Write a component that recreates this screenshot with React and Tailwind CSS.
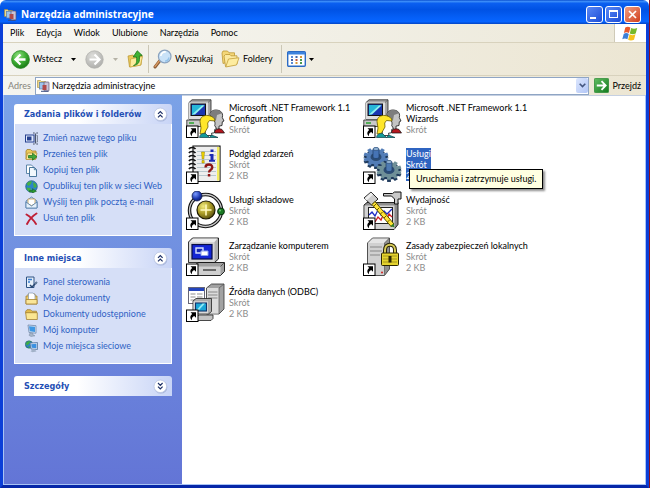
import React, { useState } from 'react';

/* ---------- small shared drawings ---------- */

const ToolsIcon = ({ size = 13 }) => (
  <svg width={size} height={size} viewBox="0 0 13 13" aria-hidden="true">
    <path d="M.5 1.500h3l1 1h4v6h-8z" fill="#ecd98a" stroke="#a58a3a" strokeWidth=".6" />
    <rect x="2.500" y="3.500" width="5" height="6.500" fill="#9cc4ee" stroke="#5b7fae" strokeWidth=".7" />
    <rect x="7" y="3" width="5" height="9" rx=".8" fill="#c9c4d8" stroke="#5d5674" strokeWidth=".7" />
    <rect x="5.500" y="6" width="4" height="5" fill="#b04a4a" />
    <path d="M4 12.300h7.500" stroke="#3a4d80" />
  </svg>
);

const Caret = ({ color = '#000' }) => (
  <svg width="5" height="3" viewBox="0 0 5 3" aria-hidden="true">
    <path d="M0 0h5L2.500 3z" fill={color} />
  </svg>
);

const Chevrons = ({ down }) => (
  <svg width="15" height="15" viewBox="0 0 15 15" aria-hidden="true">
    <circle cx="7.800" cy="8" r="6.600" fill="#8c9cc8" opacity=".6" />
    <circle cx="7.300" cy="7.300" r="6.300" fill="#fff" stroke="#b9c4e2" strokeWidth=".8" />
    <path
      d={down ? 'M5 4l2.300 2.300L9.600 4M5 7.700l2.300 2.300L9.600 7.700' : 'M5 6.800l2.300-2.300 2.300 2.300M5 10.400l2.300-2.300 2.300 2.300'}
      fill="none"
      stroke="#1c2f66"
      strokeWidth="1.200"
    />
  </svg>
);

/* ---------- toolbar icons ---------- */

const BackIcon = () => (
  <svg width="19" height="19" viewBox="0 0 19 19" aria-hidden="true">
    <defs>
      <radialGradient id="backFill" cx=".38" cy=".28" r=".8">
        <stop offset="0" stopColor="#8fe07f" />
        <stop offset=".5" stopColor="#3fae35" />
        <stop offset="1" stopColor="#12720f" />
      </radialGradient>
    </defs>
    <circle cx="9.500" cy="9.500" r="8.900" fill="url(#backFill)" stroke="#2b8a28" strokeWidth=".8" />
    <path d="M9.500 4.500l-5 5 5 5M5 9.500h9.500" fill="none" stroke="#fff" strokeWidth="2.300" />
  </svg>
);

const ForwardIcon = () => (
  <svg width="19" height="19" viewBox="0 0 19 19" aria-hidden="true">
    <defs>
      <radialGradient id="fwdFill" cx=".4" cy=".3" r=".8">
        <stop offset="0" stopColor="#dededb" />
        <stop offset="1" stopColor="#a9a9a6" />
      </radialGradient>
    </defs>
    <circle cx="9.500" cy="9.500" r="8.700" fill="url(#fwdFill)" stroke="#b2b2ae" strokeWidth=".8" />
    <path d="M9.500 4.500l5 5-5 5M14 9.500H4.500" fill="none" stroke="#fff" strokeWidth="2.200" />
  </svg>
);

const UpIcon = () => (
  <svg width="17" height="18" viewBox="0 0 17 18" aria-hidden="true">
    <path d="M1 6l5-1 1 1.500 8-1.500-1 10-11.500 2z" fill="#e9c95c" stroke="#b7922c" strokeWidth=".7" />
    <path d="M3.500 9l12-2.500-2 8.700L3 17z" fill="#fbeb9d" stroke="#c5a23a" strokeWidth=".7" />
    <path d="M6.500 15.500c3.200-1 3.500-4 3-8.500H6.200L10.300.8l4.900 4.700-2.900.6c.7 5-.3 8.900-5.800 9.400z" fill="#3fb234" stroke="#1b7419" strokeWidth=".8" />
  </svg>
);

const SearchIcon = () => (
  <svg width="19" height="20" viewBox="0 0 19 20" aria-hidden="true">
    <path d="M7 11.500L2 18" stroke="#8a5a34" strokeWidth="3" strokeLinecap="round" />
    <path d="M6.700 11.500L2 17.500" stroke="#d99b62" strokeWidth="1.300" strokeLinecap="round" />
    <circle cx="11.700" cy="7.500" r="6.300" fill="#c9e2f8" stroke="#8ba3bf" strokeWidth="1.200" />
    <path d="M7.800 7a4.200 4.200 0 0 1 5-4" fill="none" stroke="#fff" strokeWidth="1.600" />
    <path d="M16 8.500a4.400 4.400 0 0 1-4 3.600" fill="none" stroke="#94c3ea" strokeWidth="1.400" />
  </svg>
);

const FoldersIcon = () => (
  <svg width="19" height="18" viewBox="0 0 19 18" aria-hidden="true">
    <path d="M1 3l1-2h4.500L8 2.800h5.500V10L2 13.500z" fill="#f4d779" stroke="#bd9734" strokeWidth=".8" />
    <path d="M3 6l1.500-1.500H9l1 1.300h6V14L4.500 16.500z" fill="#fbe9a0" stroke="#bd9734" strokeWidth=".8" />
    <path d="M7.500 9L18 7.800 15.500 15 4.700 17z" fill="#fdec9f" stroke="#c39e3a" strokeWidth=".8" />
  </svg>
);

const ViewsIcon = () => (
  <svg width="19" height="16" viewBox="0 0 19 16" aria-hidden="true">
    <rect x=".7" y=".7" width="17.600" height="14.600" rx="1" fill="#fff" stroke="#2c6bc4" strokeWidth="1.400" />
    <rect x="1" y="1" width="17" height="2.500" fill="#3d83dd" />
    <path d="M4 5h2v2H4zM4 11h2v2H4z" fill="#5a8bd6" />
    <path d="M8.500 5h2v2h-2zM4 8h2v2H4z" fill="#3f64aa" />
    <path d="M13 5h2v2h-2zM8.500 11h2v2h-2z" fill="#d89a3a" />
    <path d="M8.500 8h2v2h-2z" fill="#c2523c" />
    <path d="M13 8h2v2h-2zM13 11h2v2h-2z" fill="#4a9a50" />
  </svg>
);

const GoIcon = () => (
  <svg width="15" height="15" viewBox="0 0 15 15" aria-hidden="true">
    <defs>
      <linearGradient id="goFill" x1="0" y1="0" x2="1" y2="1">
        <stop offset="0" stopColor="#62bd62" />
        <stop offset="1" stopColor="#127a1d" />
      </linearGradient>
    </defs>
    <rect x=".4" y=".4" width="14.200" height="14.200" rx="1" fill="url(#goFill)" stroke="#2a8a34" strokeWidth=".8" />
    <path d="M7.500 3.200l4.200 4.300-4.200 4.300M11 7.500H2.800" fill="none" stroke="#fff" strokeWidth="1.800" />
  </svg>
);

const WindowsFlag = () => (
  <svg width="17" height="15" viewBox="0 0 17 15" aria-hidden="true">
    <path d="M3.300 1.500C5 .4 6.700.4 8.400 1.500L7 7C5.400 6 3.600 6 1.900 7z" fill="#e8582c" />
    <path d="M9.200 1.900c1.800 1.100 3.800 1.100 6 0L13.700 7.400c-2 1.100-4.100 1.100-5.900 0z" fill="#76b82a" />
    <path d="M1.700 7.900c1.700-1.100 3.500-1 5.100 0l-1.400 5.300c-1.600-1-3.400-1-5.100 0z" fill="#3c7fd6" />
    <path d="M7.500 8.300c1.800 1.100 3.900 1.100 6 0L12 13.700c-2 1.100-4.200 1.100-5.900 0z" fill="#f6c21c" />
  </svg>
);

/* ---------- task pane icons ---------- */

const taskIcons = {
  rename: (
    <>
      <rect x=".5" y="3" width="8.500" height="7" fill="#dfe8fb" stroke="#26408f" />
      <rect x="2" y="4.500" width="4.500" height="4" fill="#26408f" />
      <path d="M8 1h1.700M11.300 1H13M10.500 1.500v10M8 12h1.700M11.300 12H13" stroke="#4b556c" strokeWidth="1.200" />
      <path d="M11.500 3.500h1v6.500h-1" fill="none" stroke="#6b7487" strokeWidth=".8" />
    </>
  ),
  move: (
    <>
      <path d="M1 3l1-1.500h3.500L7 3h4v8H1z" fill="#eac95c" stroke="#a6822a" strokeWidth=".8" />
      <path d="M2.500 5H12l-1.500 6.500H1z" fill="#fbea9a" stroke="#b8943a" strokeWidth=".8" />
      <path d="M3.500 7.500h4V5.200L12 8.800l-4.500 3.400V10h-4z" fill="#42a83b" stroke="#1d6a1b" strokeWidth=".7" />
    </>
  ),
  copy: (
    <>
      <path d="M1.500 1h5L8 2.500V9.500H1.500z" fill="#fff" stroke="#4f7aa0" strokeWidth=".9" />
      <path d="M4.500 3.500h5l2 2v7h-7z" fill="#f2f8fd" stroke="#386a92" strokeWidth=".9" />
      <path d="M9.300 3.700v2h2" fill="none" stroke="#386a92" strokeWidth=".8" />
    </>
  ),
  publish: (
    <>
      <circle cx="6.500" cy="6.500" r="5.800" fill="#2c84c8" stroke="#1b5385" strokeWidth=".7" />
      <path d="M1.500 4C3 1.500 5 1 7 1.200L6 4 3.500 6zM8 2l3 2 .8 3-3 1zM1.500 7.500l4 .5 1 4C4 12 2 10.500 1.500 7.500z" fill="#46b046" />
      <path d="M4.500 10.500h3V8.700l4 2.500-4 1.800v-1H4.500z" fill="#2e9a33" stroke="#125e16" strokeWidth=".5" />
    </>
  ),
  mail: (
    <>
      <path d="M1 5l5.500-4L12 5v7H1z" fill="#b9d3ee" stroke="#4c78a6" strokeWidth=".8" />
      <path d="M3 3h7v5L6.500 9.500 3 8z" fill="#fff" stroke="#c9a052" strokeWidth=".8" />
      <path d="M1 12V6l5.500 4L12 6v6z" fill="#e6f0fa" stroke="#4c78a6" strokeWidth=".8" />
    </>
  ),
  remove: <path d="M1.500 2.500c3.500 2 7 5.500 9.500 9.500M11.500 1.500C7.500 4 4 8 2 12" fill="none" stroke="#bf1f36" strokeWidth="1.900" strokeLinecap="round" />,
  panel: (
    <>
      <path d="M1.500 1h7.500v10.500H1.500z" fill="#e6effa" stroke="#2e5384" />
      <path d="M3 3.500h4M3 6h2" stroke="#3a7ed0" strokeWidth="1.300" />
      <path d="M5 9l2 2 5-5" fill="none" stroke="#27456f" strokeWidth="1.500" />
      <circle cx="11" cy="7" r="1.200" fill="#68809d" />
    </>
  ),
  documents: (
    <>
      <path d="M1 4h2V2h7v2h2v8H1z" fill="#efcd68" stroke="#a58232" strokeWidth=".8" />
      <path d="M3.500 1H8l2 2v6H3.500z" fill="#fff" stroke="#8195b2" strokeWidth=".7" />
      <path d="M1 7.500h11V12H1z" fill="#fae598" stroke="#a58232" strokeWidth=".8" />
    </>
  ),
  shared: (
    <>
      <path d="M.7 3.200L2 1.700h3.500L7 3.200h4.500v2H.7z" fill="#e3bb4c" stroke="#a58232" strokeWidth=".8" />
      <path d="M.7 4.700h11.600v6.800H1.500z" fill="#fbe692" stroke="#a58232" strokeWidth=".8" />
    </>
  ),
  computer: (
    <>
      <path d="M3 1l8 .7v7.500L4 8.500z" fill="#dbe4f0" stroke="#7089ad" strokeWidth=".8" />
      <path d="M4 2.200l6 .5v5.200l-5.200-.6z" fill="#3e97e4" />
      <path d="M5 9l3 .5v1.500l2 .8-4 .7-2-1.200z" fill="#a8b6c9" stroke="#7788a1" strokeWidth=".5" />
    </>
  ),
  network: (
    <>
      <circle cx="4" cy="4.500" r="3.700" fill="#2b82c6" stroke="#1b5a2d" strokeWidth=".5" />
      <path d="M.8 3.500C2 1.200 4 1 5.500 1.300L4 4 2 5.500zM3 6.200l2.500.3-.5 1.700z" fill="#3ead42" />
      <path d="M5 3l7.500-.5v7L6 9z" fill="#d4e0ef" stroke="#57749c" strokeWidth=".8" />
      <path d="M6.200 4.200l5.200-.4v4.500l-4.600-.5z" fill="#3b8fe0" />
      <path d="M7.500 9.500h2.500l1.500 2-4 .8-2-1z" fill="#a2b2c8" />
    </>
  ),
};

/* ---------- file icons ---------- */

const ShortcutArrow = () => (
  <g>
    <rect x=".5" y="27" width="11.500" height="11.500" fill="#fff" stroke="#000" />
    <path d="M4.500 29.200h5.500v5.500L8.200 33c-1.800.8-2.500 2-2.200 4.200-2.200-1.500-2.200-4.500.2-6.200z" fill="#000" />
  </g>
);

const FrameworkArt = () => (
  <>
    <path d="M3 3.500L6 .8h19v17l-3 2.400H3z" fill="#a8a8a8" stroke="#222" strokeWidth=".8" />
    <path d="M3 3.500h19v16.700H3z" fill="#dedede" />
    <path d="M22 3.500L25 .8" stroke="#555" strokeWidth=".7" />
    <rect x="5" y="5" width="14.500" height="11.500" fill="#1a35b0" stroke="#111" />
    <path d="M6 6h12.500L7 16H6z" fill="#27b6d8" />
    <path d="M6 15.500l10-9h2.500L9 15.500z" fill="#8ff0ee" />
    <path d="M.8 21h17v6.500h-17z" fill="#c9c9c9" stroke="#222" strokeWidth=".8" />
    <path d="M3 24h5" stroke="#27a32e" strokeWidth="1.500" />
    {/* person at the back */}
    <path d="M24 15c1-4 6-5 10-3 2.500 1.300 3 4 2.300 6.500l1.700 3.500-1.700.8-.3 3.700-3 .6v5h-6z" fill="#c4c4c4" stroke="#111" strokeWidth=".8" />
    <path d="M24 15c1-4 6-5 10-3 1 .6 1.700 1.400 2 2.300l-5 1.700-1 5-2.500 1z" fill="#7d7d7d" />
    <path d="M28 33c1.500-3 5-4 8-2.500l2.500 3.500H29z" fill="#b41820" stroke="#111" strokeWidth=".7" />
    {/* person in front */}
    <path d="M20 21c2-2 7-2 8.500 1 .8 1.800.5 3.500.2 4.500l1.800 3-1.700.8-.3 3.500-3 .4.500 2.300h-7z" fill="#fff" stroke="#111" strokeWidth=".8" />
    <path d="M14 22.500c0-4.500 4-6.500 8-6 4.500.5 7 3 7 5.500l-5.500-.5-1.800 2.500.3 4-2 3.500-2 3.500h-4l1-6z" fill="#ffe62a" stroke="#6a5b00" strokeWidth=".8" />
    <path d="M13.500 38.500c.5-3.500 3-4.500 6-4l4 4 2-2.500 6.500 2.500z" fill="#149a9a" stroke="#0b3d46" strokeWidth=".7" />
  </>
);

const EventsArt = () => (
  <>
    <path d="M7 1h27v35.500H7z" fill="#eee" stroke="#111" strokeWidth="1.200" />
    <path d="M31 2h2.500v33.500H31z" fill="#f3ec60" />
    <path d="M11 6.500h19M11 10.500h19M11 14.500h19M11 18.500h19M11 22.500h19M11 26.500h19M13 30.500h17" stroke="#a9bdc4" strokeWidth=".8" />
    {[3, 7, 11, 15, 19, 23].map((y) => (
      <path key={y} d={`M3 ${y + 1}c1-2 5-2 6.500 0`} fill="none" stroke="#111" strokeWidth="1.700" />
    ))}
    <path d="M15.500 7h3l-.7 7h-1.600zM16 15.500h2.200v2.500H16z" fill="#f2d800" stroke="#8f7b00" strokeWidth=".5" />
    <path d="M24.500 4.500h3v2.500h-3zM23.500 9h4v6H29v1.800h-6V15h1.500v-4h-1z" fill="#1c2bb5" />
    <path d="M19.500 22.500c0-4 7-4 6.800 0 0 2.500-3.300 2-3.300 5" fill="none" stroke="#8e1414" strokeWidth="2.300" />
    <rect x="21.800" y="29" width="2.500" height="2.500" fill="#8e1414" />
  </>
);

const ComponentsArt = () => (
  <>
    <defs>
      <radialGradient id="gold" cx=".35" cy=".3" r=".8">
        <stop offset="0" stopColor="#f1ea7d" />
        <stop offset=".5" stopColor="#aa9b25" />
        <stop offset="1" stopColor="#4a430c" />
      </radialGradient>
      <radialGradient id="blueBall" cx=".35" cy=".3" r=".8">
        <stop offset="0" stopColor="#7c9cff" />
        <stop offset=".6" stopColor="#1c37ae" />
        <stop offset="1" stopColor="#0a145c" />
      </radialGradient>
    </defs>
    <circle cx="19.500" cy="19.500" r="16" fill="none" stroke="#111" strokeWidth="3.500" />
    <circle cx="19.500" cy="19.500" r="16" fill="none" stroke="#c9c9c9" strokeWidth="1.300" />
    <circle cx="20" cy="19" r="9" fill="url(#gold)" stroke="#1e1a00" strokeWidth="1.200" />
    <path d="M20 13.500v11M14.500 19h11" stroke="#fff9be" strokeWidth="1.600" />
    <circle cx="11" cy="5" r="5" fill="url(#blueBall)" stroke="#0a1440" strokeWidth=".7" />
    <circle cx="35" cy="20.500" r="3.400" fill="#1b7a23" stroke="#062e0a" />
    <circle cx="34" cy="19.500" r="1" fill="#70cf70" />
  </>
);

const ComputerArt = () => (
  <>
    <path d="M2.500 5L6.500 1h26v21l-4 3.500h-26z" fill="#b0b0b0" stroke="#111" strokeWidth=".9" />
    <path d="M2.900 5h25.600v20.100H2.900z" fill="#d6d6d6" />
    <path d="M3.500 5l3.500-3.600h24.500L28.500 5z" fill="#ececec" />
    <rect x="6" y="7.500" width="20" height="14.500" fill="#1426d4" stroke="#080d45" strokeWidth="1.200" />
    <path d="M10 11h7v5h-7z" fill="#1426b4" stroke="#d7e2ff" strokeWidth="1.400" />
    <path d="M15 14h7v4.500h-7z" fill="#fff" stroke="#8aa0ec" strokeWidth="1" />
    <path d="M8 29l4-3.500h26.500v9l-4 4H8z" fill="#a0a0a0" stroke="#111" strokeWidth=".9" />
    <path d="M8 29.500h26.500v8.500H8z" fill="#d0d0d0" />
    <path d="M17 33h13" stroke="#333" strokeWidth="1.300" />
    <path d="M34.500 29.500l4-4" stroke="#444" strokeWidth=".8" />
  </>
);

const OdbcArt = () => (
  <>
    <rect x="2.500" y="4.500" width="16" height="16" fill="#fff" stroke="#667" />
    <rect x="3" y="5" width="15" height="3" fill="#2445bd" />
    <path d="M4.500 11h5M11 11h5.500M4.500 14h5M11 14h5.500M4.500 17h12" stroke="#8f8f8f" strokeWidth="1.200" />
    <path d="M20.500 5l5-4h12.500v25l-5 5h-12.500z" fill="#a2a2a2" stroke="#333" strokeWidth=".8" />
    <path d="M21 5h12v25.600H21z" fill="#dcdcdc" />
    <path d="M22 9h9.500M22 12h9.500M22 15h9.500" stroke="#888" />
    <path d="M33 5l5-4M33 5v26" stroke="#555" strokeWidth=".7" />
    <path d="M7 18l3-2.500h15.500v13l-3 2.500H7z" fill="#adadad" stroke="#222" strokeWidth=".8" />
    <rect x="7.500" y="18.300" width="14.500" height="12" fill="#dadada" />
    <rect x="9.500" y="20" width="11" height="8" fill="#1aa6d8" stroke="#11346b" strokeWidth="1.100" />
    <path d="M10.500 27l6-6.500h2.500l-6 6.500z" fill="#8deaf5" />
    <path d="M11 33.500l2-1.500h14v3.500l-2 2H11z" fill="#c4c4c4" stroke="#222" strokeWidth=".8" />
  </>
);

const teeth = [0, 36, 72, 108, 144, 180, 216, 252, 288, 324];

const Gear = ({ x, y, fill, top }) => (
  <g transform={`translate(${x} ${y})`}>
    {[2.2, 0].map((dy) => (
      <g key={dy} transform={`translate(0 ${dy}) scale(1 .78)`} fill={dy ? '#1f3a5c' : fill}>
        <circle r="9.500" />
        {teeth.map((a) => (
          <rect key={a} x="-1.900" y="-12.500" width="3.800" height="5" transform={`rotate(${a})`} />
        ))}
      </g>
    ))}
    <ellipse cx="0" cy="0" rx="5.500" ry="4" fill="#2c4c74" />
    <path d="M-3-8v8c0 2 6 2 6 0v-8z" fill={top} stroke="#1d3d66" strokeWidth=".7" />
    <ellipse cx="0" cy="-8" rx="3" ry="1.400" fill="#9dbede" stroke="#1d3d66" strokeWidth=".6" />
  </g>
);

const ServicesArt = () => (
  <>
    <Gear x={13} y={12} fill="#537db7" top="#4674b5" />
    <Gear x={26} y={25} fill="#6f9098" top="#4d7ab2" />
  </>
);

const PerformanceArt = () => (
  <>
    <path d="M1 14l3-2.500h31v22l-4 5H1z" fill="#8d8d8d" stroke="#111" strokeWidth=".9" />
    <path d="M1.500 14.500h30v23.500h-30z" fill="#d2d2d2" />
    <rect x="5.500" y="16.500" width="24" height="16" fill="#fff" stroke="#222" />
    <path d="M6 24l3-3 3 4 3-6 3 5 3-4 3 3 5-5" fill="none" stroke="#1d2bc6" strokeWidth="1.300" />
    <path d="M12 31l3-5 3 3 3-7 3 6 2-5 3 3" fill="none" stroke="#d01c24" strokeWidth="1.300" />
    <path d="M20.500 2.500h9l2-1.500h6.500v7h-3v5h-3.500V8l-3-3h-8z" fill="#c9c9c9" stroke="#111" />
    <path d="M1 7l7-6 7 7-6.500 6z" fill="#ccc" stroke="#222" />
    <path d="M1.500 7.500L8 1.500l2 2-6.500 6z" fill="#eee" />
    <path d="M9 13.500l3-3L31 33l-2.500 3z" fill="#ffe434" stroke="#574d00" />
    <path d="M13 13l-2 2M16 17l-2 2M19.500 21l-2 2M23 25l-2 2M26.500 29l-2 2" stroke="#6a5b00" />
    <path d="M27.500 35l3-2.500 1 4z" fill="#2d7b2d" />
  </>
);

const SecurityArt = () => (
  <>
    <path d="M4.500 6l5-5h17v31l-5 6.500h-17z" fill="#909090" stroke="#444" strokeWidth=".9" />
    <path d="M5 6h16.500v32H5z" fill="#d0d0d0" />
    <path d="M5 6l4.700-4.600h16L21.500 6z" fill="#e4e4e4" />
    <path d="M21.500 6l5-5M21.500 6v32" stroke="#555" strokeWidth=".7" />
    <path d="M7 10h12M7 14h12M7 18h10" stroke="#888" strokeWidth="1.100" />
    <circle cx="19" cy="35.500" r="1" fill="#d42222" />
    <path d="M22 18v-5c0-7 10-7 10 0v5" fill="none" stroke="#26230a" strokeWidth="4" />
    <path d="M22 18v-5c0-7 10-7 10 0v5" fill="none" stroke="#d8cb56" strokeWidth="2" />
    <rect x="18.500" y="16" width="17" height="12.500" rx="1" fill="#e4d32e" stroke="#2c2700" />
    <path d="M20 19h14M20 22h14M20 25h14" stroke="#a4941a" strokeWidth="1" />
    <path d="M25.500 19h3v6.500h-3z" fill="#2c2700" />
  </>
);

/* ---------- data ---------- */

const menus = ['Plik', 'Edycja', 'Widok', 'Ulubione', 'Narzędzia', 'Pomoc'];

const panels = [
  {
    title: 'Zadania plików i folderów',
    items: [
      ['rename', 'Zmień nazwę tego pliku'],
      ['move', 'Przenieś ten plik'],
      ['copy', 'Kopiuj ten plik'],
      ['publish', 'Opublikuj ten plik w sieci Web'],
      ['mail', 'Wyślij ten plik pocztą e-mail'],
      ['remove', 'Usuń ten plik'],
    ],
  },
  {
    title: 'Inne miejsca',
    items: [
      ['panel', 'Panel sterowania'],
      ['documents', 'Moje dokumenty'],
      ['shared', 'Dokumenty udostępnione'],
      ['computer', 'Mój komputer'],
      ['network', 'Moje miejsca sieciowe'],
    ],
  },
  { title: 'Szczegóły', items: [] },
];

const files = [
  { name: 'Microsoft .NET Framework 1.1 Configuration', art: FrameworkArt },
  { name: 'Microsoft .NET Framework 1.1 Wizards', art: FrameworkArt },
  { name: 'Podgląd zdarzeń', size: '2 KB', art: EventsArt },
  { name: 'Usługi', size: '2 KB', art: ServicesArt, hint: 'Uruchamia i zatrzymuje usługi.' },
  { name: 'Usługi składowe', size: '2 KB', art: ComponentsArt },
  { name: 'Wydajność', size: '2 KB', art: PerformanceArt },
  { name: 'Zarządzanie komputerem', size: '2 KB', art: ComputerArt },
  { name: 'Zasady zabezpieczeń lokalnych', size: '2 KB', art: SecurityArt },
  { name: 'Źródła danych (ODBC)', size: '2 KB', art: OdbcArt },
];

/* ---------- parts ---------- */

const TitleBar = () => (
  <header className="flex h-6 shrink-0 items-center rounded-t-md bg-[linear-gradient(to_bottom,#0a4fd0_0%,#3a8cf8_6%,#0a5ff0_14%,#0052e4_40%,#0560f8_75%,#0664ff_90%,#0344c4_100%)] pt-1 pr-2 pl-1">
    <ToolsIcon />
    <h1 className="ml-1 flex-1 font-['Noto_Sans','Open_Sans',sans-serif] text-[10px] leading-4 font-bold text-white">
      Narzędzia administracyjne
    </h1>
    <div className="flex gap-0.5">
      <button aria-label="Minimalizuj" className="flex size-[17px] items-end rounded-[3px] border border-white bg-linear-to-br from-[#5a88f5] to-[#1c4bd6] p-[3px]">
        <span className="h-0.5 w-1.5 bg-white" />
      </button>
      <button aria-label="Maksymalizuj" className="flex size-[17px] items-center justify-center rounded-[3px] border border-white bg-linear-to-br from-[#5a88f5] to-[#1c4bd6]">
        <span className="h-2 w-[9px] border border-t-2 border-white" />
      </button>
      <button aria-label="Zamknij" className="flex size-[17px] items-center justify-center rounded-[3px] border border-white bg-linear-to-br from-[#f09c80] to-[#cf3a14]">
        <svg width="9" height="9" viewBox="0 0 9 9" aria-hidden="true">
          <path d="M1 1l7 7M8 1L1 8" stroke="#fff" strokeWidth="1.700" />
        </svg>
      </button>
    </div>
  </header>
);

const MenuBar = () => (
  <div className="flex h-[19px] shrink-0 items-stretch border-b border-[#d8d2bd] bg-linear-to-r from-[#f7f7f4] to-[#ece8d8]">
    <nav className="flex flex-1 items-center gap-3 pl-[7px]">
      {menus.map((m) => (
        <button key={m}>{m}</button>
      ))}
    </nav>
    <div className="flex w-8 items-center justify-center border-l border-[#cfcab8] bg-white">
      <WindowsFlag />
    </div>
  </div>
);

const Toolbar = () => (
  <div className="flex h-[33px] shrink-0 items-center border-b border-[#d8d2bd] bg-linear-to-r from-[#f4f4ef] to-[#ece6d3] pl-2">
    <button className="flex items-center gap-[3px]">
      <BackIcon />
      Wstecz
    </button>
    <button aria-label="Historia wstecz" className="ml-2 p-px"><Caret /></button>
    <button aria-label="Dalej" disabled className="ml-2"><ForwardIcon /></button>
    <button aria-label="Historia dalej" disabled className="ml-2 p-px"><Caret color="#b5b2a6" /></button>
    <button aria-label="Do góry" className="ml-2"><UpIcon /></button>
    <span className="ml-1 h-7 w-px bg-[#cbc7b6]" />
    <button className="ml-1 flex items-center gap-[3px]">
      <SearchIcon />
      Wyszukaj
    </button>
    <button className="ml-2 flex items-center gap-[3px]">
      <FoldersIcon />
      Foldery
    </button>
    <span className="ml-2 h-7 w-px bg-[#cbc7b6]" />
    <button aria-label="Widoki" className="ml-[5px] flex items-center gap-[3px]">
      <ViewsIcon />
      <Caret />
    </button>
  </div>
);

const AddressBar = () => {
  const [address, setAddress] = useState('Narzędzia administracyjne');
  return (
    <form onSubmit={(e) => e.preventDefault()} className="flex h-[19px] shrink-0 items-center bg-linear-to-r from-[#f4f4ef] to-[#ece6d3] px-[5px]">
      <label htmlFor="address" className="w-6 text-[#85837a]">Adres</label>
      <div className="ml-[3px] flex h-[18px] flex-1 items-center border border-[#8fa5c4] bg-white pl-px">
        <ToolsIcon />
        <input
          id="address"
          value={address}
          onChange={(e) => setAddress(e.target.value)}
          className="ml-0.5 h-4 min-w-0 flex-1 bg-white outline-none"
        />
        <button type="button" aria-label="Rozwiń" className="flex h-[15px] w-3 items-center justify-center rounded-xs bg-linear-to-br from-[#dce6fd] to-[#b2c6f6]">
          <svg width="7" height="5" viewBox="0 0 7 5" aria-hidden="true">
            <path d="M.7.8l2.800 2.800L6.300.8" fill="none" stroke="#43557f" strokeWidth="1.600" />
          </svg>
        </button>
      </div>
      <button type="submit" className="ml-[5px] flex items-center gap-[3px]">
        <GoIcon />
        Przejdź
      </button>
    </form>
  );
};

const Panel = ({ title, items }) => {
  const collapsed = items.length === 0;
  return (
    <section>
      <button className="flex h-5 w-full items-center justify-between rounded-t-[3px] bg-linear-to-r from-white from-40% to-[#c8d4f6] pr-1 pl-2.5 font-['DejaVu_Sans_Condensed','Noto_Sans',sans-serif] font-bold text-[#1f4fb5]">
        <span>{title}</span>
        <Chevrons down={collapsed} />
      </button>
      {!collapsed && (
        <ul className="border border-t-0 border-white bg-[#d6dff7] pt-1.5 pb-[9px] pl-2.5">
          {items.map(([icon, text]) => (
            <li key={icon}>
              <a href="#" className="flex h-4 items-center gap-[5px] whitespace-nowrap text-[#2f5fc4]">
                <svg width="13" height="13" viewBox="0 0 13 13" aria-hidden="true">{taskIcons[icon]}</svg>
                {text}
              </a>
            </li>
          ))}
        </ul>
      )}
    </section>
  );
};

const FileItem = ({ file, selected, onSelect }) => {
  const Art = file.art;
  return (
    <li className="relative h-[46px]">
      <button onClick={onSelect} className="flex items-start gap-1 text-left leading-[11px]">
        <svg width="39" height="39" viewBox="0 0 39 39" aria-hidden="true">
          <Art />
          <ShortcutArrow />
        </svg>
        <span className={selected ? 'mt-[3px] block max-w-32 bg-[#2f64c1] text-white' : 'mt-[3px] block max-w-32 text-black'}>
          <span className="block">{file.name}</span>
          <span className={selected ? 'block' : 'block text-[#8c8c8c]'}>Skrót</span>
          {file.size && <span className={selected ? 'block' : 'block text-[#8c8c8c]'}>{file.size}</span>}
        </span>
      </button>
      {selected && file.hint && (
        <div role="tooltip" className="absolute top-6 left-[46px] z-10 border border-black bg-[#ffffe1] px-1.5 py-[3px] leading-3 whitespace-nowrap shadow-[2px_2px_2px_rgba(0,0,0,0.45)]">
          {file.hint}
        </div>
      )}
    </li>
  );
};

const App = () => {
  const [selected, setSelected] = useState('Usługi');

  return (
    <div className="flex h-screen flex-col border-r border-[#8c1020] font-[Lato,'Liberation_Sans',sans-serif] text-[9px] leading-3 text-black">
      <TitleBar />
      <div className="flex min-h-0 flex-1 flex-col border-x-[3px] border-b-[3px] border-x-[#0b3fd8] border-b-[#0627a8]">
        <MenuBar />
        <Toolbar />
        <AddressBar />
        <div className="flex min-h-0 flex-1 border-x border-b border-[#a9c4f5]">
          <aside className="flex w-[178px] shrink-0 flex-col gap-3 bg-linear-to-b from-[#7ba2e7] to-[#6375d6] px-2.5 pt-[9px]">
            {panels.map((p) => (
              <Panel key={p.title} {...p} />
            ))}
          </aside>
          <main className="flex-1 border-t border-[#c5d0e2] bg-white pt-[3px] pl-1">
            <ul className="grid grid-cols-[repeat(auto-fill,177px)]">
              {files.map((f) => (
                <FileItem key={f.name} file={f} selected={f.name === selected} onSelect={() => setSelected(f.name)} />
              ))}
            </ul>
          </main>
        </div>
      </div>
    </div>
  );
};

export default App;
